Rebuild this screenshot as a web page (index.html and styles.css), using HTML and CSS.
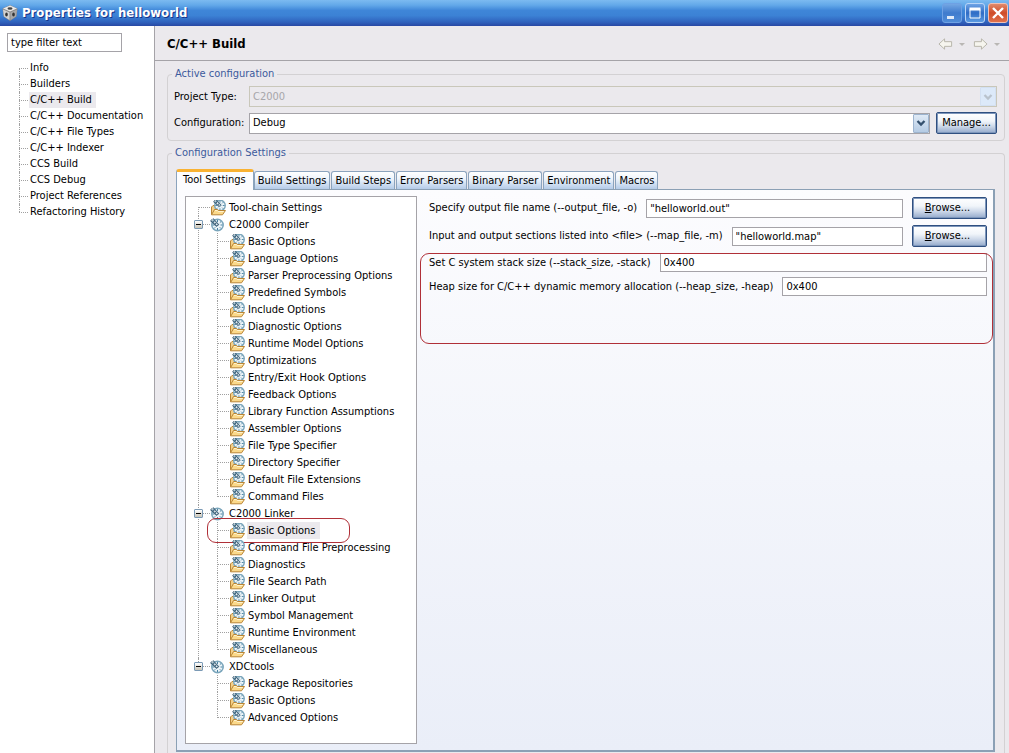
FILE: index.html
```html
<!DOCTYPE html>
<html lang="en">
<head>
<meta charset="utf-8">
<title>Properties for helloworld</title>
<link rel="stylesheet" href="styles.css">
</head>
<body>
<svg class="sprite" aria-hidden="true">
  <symbol id="gauge" viewBox="0 0 14 14">
    <circle cx="7.500" cy="7" r="5.700" fill="#edf5f9" stroke="#7aa5bb" stroke-width="1.500"/>
    <path d="M7.500 2v2M12.500 7h-2M7.500 12v-2M2.500 7h2M11 3.500l-1.200 1.200M11 10.500l-1.200-1.200M4 10.500l1.200-1.200" stroke="#4a83a3" fill="none"/>
    <path d="M.5 2.500L7 8.500M3 .5L9 7" stroke="#3c6078" stroke-width="1.100"/>
    <path d="M1.500 1.500L8.300 8" stroke="#3c6078" stroke-width="1.300" stroke-dasharray="1.300 1.300"/>
  </symbol>
  <symbol id="folder" viewBox="0 0 16 16">
    <path d="M1.500 14.500V7L3 5.500h2.500l1 1.500H13v3" fill="#f3d08a" stroke="#b98535"/>
    <use href="#gauge" x="3" y="-1" width="13" height="13"/>
    <path d="M1.500 14.800L4.500 9.500h3l1 1h7l-3 4.300z" fill="#fbd98a" stroke="#b98535"/>
    <path d="M5 10.500h2.200l1 1h5.600" stroke="#fff3cf" fill="none"/>
  </symbol>
  <symbol id="chevron" viewBox="0 0 10 8">
    <path d="M1.500 2L5 5.500L8.500 2" fill="none" stroke="currentColor" stroke-width="2.300"/>
  </symbol>
  <symbol id="arrow" viewBox="0 0 16 14">
    <path d="M1 7L7 1.500V4.500H14.500V9.500H7V12.500Z" fill="#f6f5ee" stroke="#b5b3a8"/>
  </symbol>
</svg>

<header class="titlebar">
  <svg class="app-icon" viewBox="0 0 16 16" aria-hidden="true">
    <path d="M8 0L15.500 3.500L14.500 11.500L8 16L1.500 11.500L.5 3.500Z" fill="#8a8a8a"/>
    <path d="M8 .5L15 3.500L8 6.500L1 3.500Z" fill="#e9e9e9"/>
    <path d="M1 4.500L7.500 7.500V15L2 11.500Z" fill="#d3d3d3"/>
    <path d="M15 4.500L8.500 7.500V15L14 11.500Z" fill="#a9a9a9"/>
    <ellipse cx="8" cy="3.500" rx="2.500" ry="1.200" fill="#444"/>
    <ellipse cx="4.500" cy="9.500" rx="1.300" ry="2" fill="#333"/>
    <ellipse cx="11.500" cy="9.500" rx="1.300" ry="2" fill="#333"/>
  </svg>
  <h1 class="titlebar-text">Properties for helloworld</h1>
  <div class="window-buttons">
    <button class="window-button" type="button" aria-label="Minimize"><svg viewBox="0 0 18 18"><path d="M4 13.500h7" stroke="#dfeaf9" stroke-width="3"/></svg></button>
    <button class="window-button window-button-max" type="button" aria-label="Maximize"><svg viewBox="0 0 18 18"><path d="M4 5.500h10v8.500H4z" fill="none" stroke="#fff"/><path d="M3.500 5h11" stroke="#fff" stroke-width="3"/></svg></button>
    <button class="window-button window-button-close" type="button" aria-label="Close"><svg viewBox="0 0 18 18"><path d="M4 4l10 10M14 4l-10 10" stroke="#fff" stroke-width="2.400"/></svg></button>
  </div>
</header>

<div class="dialog">
  <nav class="sidebar">
    <input class="field filter" type="text" value="type filter text" aria-label="Filter">
    <ul class="pages">
      <li>Info</li>
      <li>Builders</li>
      <li><span class="selected">C/C++ Build</span></li>
      <li>C/C++ Documentation</li>
      <li>C/C++ File Types</li>
      <li>C/C++ Indexer</li>
      <li>CCS Build</li>
      <li>CCS Debug</li>
      <li>Project References</li>
      <li>Refactoring History</li>
    </ul>
  </nav>

  <main class="content">
    <div class="page-header">
      <h2 class="page-title">C/C++ Build</h2>
      <div class="history">
        <button class="history-button" type="button" aria-label="Back"><svg class="arrow"><use href="#arrow"/></svg></button>
        <button class="history-button history-menu" type="button" aria-label="Back menu"></button>
        <button class="history-button" type="button" aria-label="Forward"><svg class="arrow arrow-forward"><use href="#arrow"/></svg></button>
        <button class="history-button history-menu" type="button" aria-label="Forward menu"></button>
      </div>
    </div>

    <div class="groups">
      <fieldset class="group">
        <legend>Active configuration</legend>
        <div class="config-grid">
          <label for="ptype">Project Type:</label>
          <div class="combo combo-disabled combo-wide">
            <select id="ptype" disabled><option>C2000</option></select>
            <span class="combo-arrow"><svg><use href="#chevron"/></svg></span>
          </div>
          <label for="config">Configuration:</label>
          <div class="combo">
            <select id="config"><option>Debug</option></select>
            <span class="combo-arrow"><svg><use href="#chevron"/></svg></span>
          </div>
          <button class="push" type="button">Manage...</button>
        </div>
      </fieldset>

      <fieldset class="group group-settings">
        <legend>Configuration Settings</legend>
        <div class="tabs" role="tablist">
          <button class="tab tab-active" role="tab" aria-selected="true" type="button">Tool Settings</button>
          <button class="tab" role="tab" type="button">Build Settings</button>
          <button class="tab" role="tab" type="button">Build Steps</button>
          <button class="tab" role="tab" type="button">Error Parsers</button>
          <button class="tab" role="tab" type="button">Binary Parser</button>
          <button class="tab" role="tab" type="button">Environment</button>
          <button class="tab" role="tab" type="button">Macros</button>
        </div>
        <div class="panel" role="tabpanel">
          <div class="tree">
            <ul class="tree-root">
              <li class="node"><div class="row"><svg class="folder"><use href="#folder"/></svg><span>Tool-chain Settings</span></div></li>
              <li class="node"><div class="row"><button class="expander" type="button" aria-label="Collapse"></button><svg class="gauge"><use href="#gauge"/></svg><span>C2000 Compiler</span></div>
                <ul class="tree-children">
                  <li class="leaf"><svg class="folder"><use href="#folder"/></svg><span>Basic Options</span></li>
                  <li class="leaf"><svg class="folder"><use href="#folder"/></svg><span>Language Options</span></li>
                  <li class="leaf"><svg class="folder"><use href="#folder"/></svg><span>Parser Preprocessing Options</span></li>
                  <li class="leaf"><svg class="folder"><use href="#folder"/></svg><span>Predefined Symbols</span></li>
                  <li class="leaf"><svg class="folder"><use href="#folder"/></svg><span>Include Options</span></li>
                  <li class="leaf"><svg class="folder"><use href="#folder"/></svg><span>Diagnostic Options</span></li>
                  <li class="leaf"><svg class="folder"><use href="#folder"/></svg><span>Runtime Model Options</span></li>
                  <li class="leaf"><svg class="folder"><use href="#folder"/></svg><span>Optimizations</span></li>
                  <li class="leaf"><svg class="folder"><use href="#folder"/></svg><span>Entry/Exit Hook Options</span></li>
                  <li class="leaf"><svg class="folder"><use href="#folder"/></svg><span>Feedback Options</span></li>
                  <li class="leaf"><svg class="folder"><use href="#folder"/></svg><span>Library Function Assumptions</span></li>
                  <li class="leaf"><svg class="folder"><use href="#folder"/></svg><span>Assembler Options</span></li>
                  <li class="leaf"><svg class="folder"><use href="#folder"/></svg><span>File Type Specifier</span></li>
                  <li class="leaf"><svg class="folder"><use href="#folder"/></svg><span>Directory Specifier</span></li>
                  <li class="leaf"><svg class="folder"><use href="#folder"/></svg><span>Default File Extensions</span></li>
                  <li class="leaf"><svg class="folder"><use href="#folder"/></svg><span>Command Files</span></li>
                </ul>
              </li>
              <li class="node"><div class="row"><button class="expander" type="button" aria-label="Collapse"></button><svg class="gauge"><use href="#gauge"/></svg><span>C2000 Linker</span></div>
                <ul class="tree-children">
                  <li class="leaf leaf-marked"><svg class="folder"><use href="#folder"/></svg><span class="selected">Basic Options</span></li>
                  <li class="leaf"><svg class="folder"><use href="#folder"/></svg><span>Command File Preprocessing</span></li>
                  <li class="leaf"><svg class="folder"><use href="#folder"/></svg><span>Diagnostics</span></li>
                  <li class="leaf"><svg class="folder"><use href="#folder"/></svg><span>File Search Path</span></li>
                  <li class="leaf"><svg class="folder"><use href="#folder"/></svg><span>Linker Output</span></li>
                  <li class="leaf"><svg class="folder"><use href="#folder"/></svg><span>Symbol Management</span></li>
                  <li class="leaf"><svg class="folder"><use href="#folder"/></svg><span>Runtime Environment</span></li>
                  <li class="leaf"><svg class="folder"><use href="#folder"/></svg><span>Miscellaneous</span></li>
                </ul>
              </li>
              <li class="node"><div class="row"><button class="expander" type="button" aria-label="Collapse"></button><svg class="gauge"><use href="#gauge"/></svg><span>XDCtools</span></div>
                <ul class="tree-children">
                  <li class="leaf"><svg class="folder"><use href="#folder"/></svg><span>Package Repositories</span></li>
                  <li class="leaf"><svg class="folder"><use href="#folder"/></svg><span>Basic Options</span></li>
                  <li class="leaf"><svg class="folder"><use href="#folder"/></svg><span>Advanced Options</span></li>
                </ul>
              </li>
            </ul>
          </div>

          <div class="options">
            <div class="option">
              <label for="out">Specify output file name (--output_file, -o)</label>
              <input class="field" id="out" type="text" value='"helloworld.out"'>
              <button class="push push-browse" type="button"><u>B</u>rowse...</button>
            </div>
            <div class="option">
              <label for="map">Input and output sections listed into &lt;file&gt; (--map_file, -m)</label>
              <input class="field" id="map" type="text" value='"helloworld.map"'>
              <button class="push push-browse" type="button"><u>B</u>rowse...</button>
            </div>
            <div class="memory">
              <div class="option">
                <label for="stack">Set C system stack size (--stack_size, -stack)</label>
                <input class="field" id="stack" type="text" value="0x400">
              </div>
              <div class="option">
                <label for="heap">Heap size for C/C++ dynamic memory allocation (--heap_size, -heap)</label>
                <input class="field" id="heap" type="text" value="0x400">
              </div>
            </div>
          </div>
        </div>
      </fieldset>
    </div>
  </main>
</div>
</body>
</html>
```
FILE: styles.css
```css
* { box-sizing: border-box; }

body {
  margin: 0;
  min-height: 100vh;
  display: flex;
  flex-direction: column;
  background: #ebe9ed;
  color: #000;
  font: 11px/16px Tahoma, "DejaVu Sans Condensed", "DejaVu Sans", sans-serif;
}

button, input, select { font: inherit; color: inherit; margin: 0; }
ul { list-style: none; margin: 0; padding: 0; }
svg { display: block; }
.sprite { position: absolute; width: 0; height: 0; }

/* Title bar */
.titlebar {
  display: flex;
  align-items: center;
  height: 26px;
  padding: 0 1px 0 2px;
  background: linear-gradient(#7cbaf0 0, #62a8e9 20%, #3f86d8 40%, #3c82d5 60%, #2f62bd 85%, #2848a4 100%);
}
.app-icon { width: 16px; height: 16px; }
.titlebar-text {
  flex: 1;
  margin: 0 0 0 4px;
  color: #fff;
  font: bold 13px/16px "DejaVu Sans Condensed", sans-serif;
  text-shadow: 1px 1px 0 #16348a;
}
.window-buttons { display: flex; gap: 3px; }
.window-button {
  width: 20px;
  height: 20px;
  padding: 0;
  border: 1px solid #6ea1e4;
  border-radius: 3px;
  background: linear-gradient(#74a7e4, #3f7bcd 50%, #4f8cd8);
}
.window-button-max { border-color: #b9d5f7; background: linear-gradient(#6fa4e5, #2f6cc6 50%, #5b9be2); }
.window-button-close { border-color: #f0c0b4; background: linear-gradient(#e08a6c, #cf4c28 50%, #e0714c); }

/* Dialog body */
.dialog { flex: 1; display: flex; }
.sidebar {
  flex: none;
  width: 155px;
  padding: 7px 0 0 7px;
  border-right: 1px solid #a5a3a8;
  background: #fff;
}
.field {
  height: 19px;
  min-width: 0;
  padding: 0 3px;
  border: 1px solid #a5a3a8;
  background: #fff;
}
.filter { display: block; width: 115px; }

.pages { margin: 8px 0 0 12px; }
.pages li { position: relative; height: 16px; padding-left: 11px; white-space: nowrap; }
.pages li::before {
  content: "";
  position: absolute;
  left: 0;
  top: 0;
  width: 1px;
  height: 100%;
  border-left: 1px dotted #a0a0a0;
}
.pages li:first-child::before { top: 8px; height: 8px; }
.pages li:last-child::before { height: 8px; }
.pages li::after {
  content: "";
  position: absolute;
  left: 0;
  top: 8px;
  width: 9px;
  border-top: 1px dotted #a0a0a0;
}
.selected {
  display: inline-block;
  margin-left: -1px;
  padding: 0 4px 0 1px;
  background: #ebe9ed;
}

.content { flex: 1; min-width: 0; display: flex; flex-direction: column; }
.page-header {
  display: flex;
  align-items: center;
  justify-content: space-between;
  height: 35px;
  padding: 2px 9px 0 12px;
  border-bottom: 1px solid #a5a3a8;
}
.page-title { margin: 0; font: bold 13px/16px "DejaVu Sans Condensed", sans-serif; }
.history { display: flex; align-items: center; gap: 6px; }
.history-button { padding: 0; border: 0; background: none; }
.arrow { width: 15px; height: 14px; }
.arrow-forward { transform: scaleX(-1); }
.history-menu {
  margin-right: 2px;
  border: 3px solid transparent;
  border-top-color: #b9b7b4;
  border-bottom: 0;
}
.history-menu:last-child { margin-right: 0; }

.groups { flex: 1; display: flex; flex-direction: column; gap: 4px; padding: 5px 4px 0 12px; }
.group {
  min-width: 0;
  margin: 0;
  padding: 4px 7px 6px 6px;
  border: 1px solid #d3d1d3;
  border-radius: 4px;
}
.group legend { margin-left: -2px; padding: 0 3px; color: #3c5a9c; }
.config-grid {
  display: grid;
  grid-template-columns: 69px 1fr 61px;
  column-gap: 6px;
  row-gap: 5px;
  align-items: center;
}
.combo { position: relative; }
.combo-wide { grid-column: span 2; }
.combo select {
  display: block;
  width: 100%;
  height: 21px;
  padding: 0 20px 0 3px;
  border: 1px solid #a5a3a8;
  border-radius: 0;
  background: #fff;
  appearance: none;
}
.combo-arrow {
  position: absolute;
  top: 1px;
  right: 1px;
  bottom: 1px;
  width: 16px;
  display: flex;
  align-items: center;
  justify-content: center;
  border: 1px solid #9db4cf;
  border-radius: 1px;
  background: linear-gradient(#dfeaf6, #b5cbe4);
  color: #34506e;
  pointer-events: none;
}
.combo-arrow svg { width: 10px; height: 8px; }
.combo-disabled select { border-color: #c9c7ba; background: #ebe9ed; color: #a7a6aa; opacity: 1; }
.combo-disabled .combo-arrow { border-color: #d3e0f2; background: #dce9f9; color: #b9c2cc; }

.push {
  height: 22px;
  padding: 0;
  border: 1px solid #2f4f80;
  border-radius: 2px;
  background: linear-gradient(#fff, #f1f5fa 40%, #cfdaea 65%, #93a9cb);
  box-shadow: inset 0 0 0 1px #7d96bb;
}
.push-browse { width: 75px; padding-right: 4px; }

/* Tabbed settings */
.group-settings {
  flex: 1;
  display: flex;
  flex-direction: column;
  padding: 8px 9px 2px 8px;
  border-bottom: 0;
  border-radius: 4px 4px 0 0;
}
.group-settings legend { margin-left: -4px; }
.tabs { display: flex; align-items: flex-end; gap: 1px; }
.tab {
  height: 18px;
  padding: 0 3px;
  border: 1px solid #8ba3bd;
  border-bottom: 0;
  border-radius: 3px 3px 0 0;
  background: linear-gradient(#fff, #eef4fb 40%, #b4cbe8);
  white-space: nowrap;
}
.tab-active {
  z-index: 1;
  height: 21px;
  margin: 0 -1px -1px 0;
  padding: 0 7px 2px 6px;
  border-top: 3px solid #f9b233;
  background: #fcfcfe;
}
.panel {
  flex: 1;
  display: flex;
  gap: 3px;
  padding: 6px 6px 6px 8px;
  border: 1px solid #8ba0b5;
  border-right-width: 2px;
  border-bottom-width: 2px;
  background: linear-gradient(#fcfcfe, #eaeef8);
}
.tree {
  flex: none;
  width: 232px;
  padding: 2px 0 17px 12px;
  border: 1px solid #a5a3a8;
  background: #fff;
  white-space: nowrap;
}
.node, .leaf { position: relative; }
.row, .leaf { display: flex; align-items: center; height: 17px; }
.row { padding-left: 12px; gap: 5px; }
.leaf { padding-left: 12px; gap: 3px; }
.leaf .selected { line-height: 17px; }
.tree-children { margin-left: 19px; }
.node::before, .leaf::before {
  content: "";
  position: absolute;
  left: 0;
  top: 0;
  bottom: 0;
  border-left: 1px dotted #a0a0a0;
}
.node:first-child::before { top: 8px; }
.node:last-child::before { bottom: auto; height: 8px; }
.leaf:last-child::before { bottom: 8px; }
.row::before, .leaf::after {
  content: "";
  position: absolute;
  left: 0;
  top: 8px;
  width: 12px;
  border-top: 1px dotted #a0a0a0;
}
.expander {
  position: absolute;
  left: -4px;
  top: 4px;
  width: 9px;
  height: 9px;
  padding: 0;
  border: 1px solid #7b9ab5;
  border-radius: 1px;
  background: linear-gradient(#000, #000) center / 5px 1px no-repeat, linear-gradient(#fff, #c9c5b8);
}
.folder { flex: none; width: 16px; height: 16px; }
.gauge { flex: none; width: 14px; height: 14px; }
.row .folder { margin-right: -2px; }

.leaf-marked .folder, .leaf-marked .selected { position: relative; }
.leaf-marked .selected::after {
  content: "";
  position: absolute;
  left: -40px;
  right: -30px;
  top: -4px;
  height: 23px;
  border: 1px solid #b03038;
  border-radius: 9px;
  pointer-events: none;
}

.options { flex: 1; min-width: 0; display: flex; flex-direction: column; gap: 6px; padding: 1px 0 0 9px; }
.option { display: flex; align-items: center; gap: 9px; }
.option label { white-space: nowrap; }
.option .field { flex: 1; }
.memory { position: relative; display: flex; flex-direction: column; gap: 5px; }
.memory::after {
  content: "";
  position: absolute;
  left: -9px;
  right: -6px;
  top: 0;
  height: 89px;
  border: 1px solid #b03038;
  border-radius: 9px;
  pointer-events: none;
}
```
